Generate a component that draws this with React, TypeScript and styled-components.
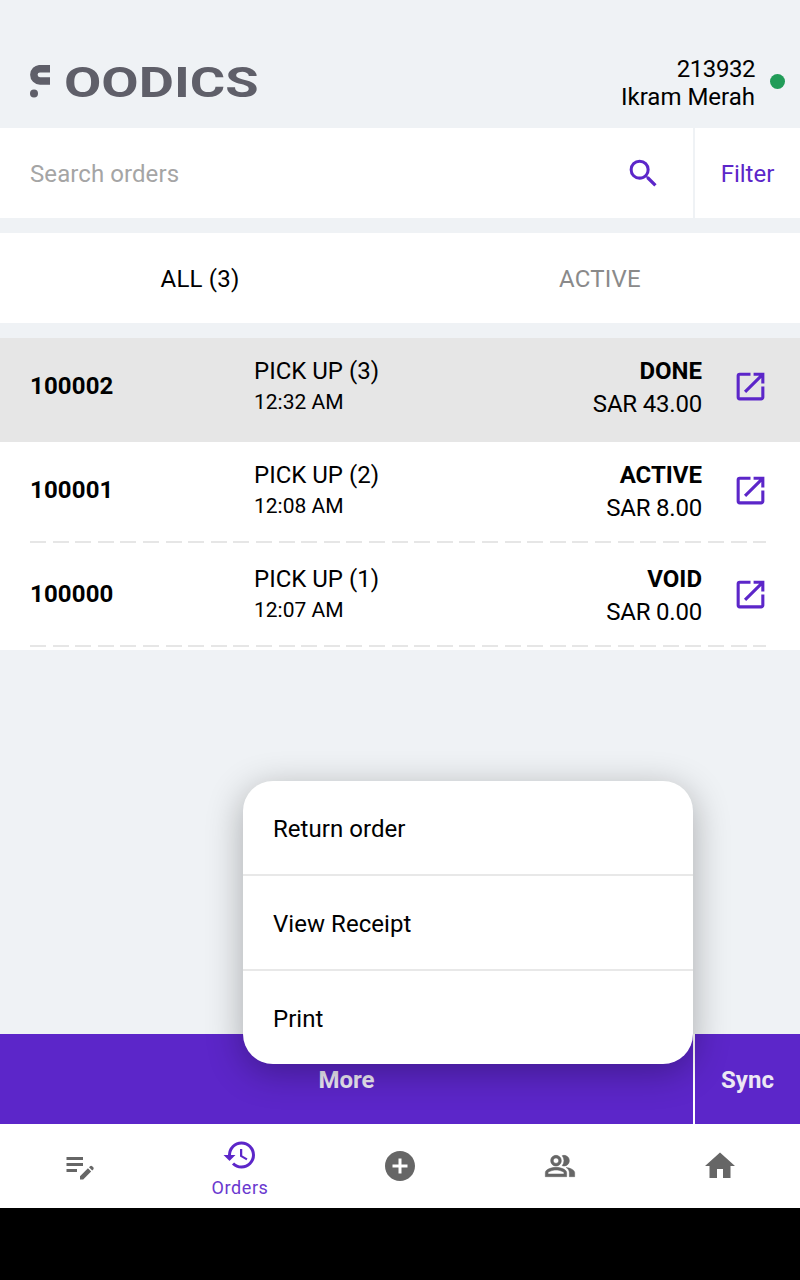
import styled, { createGlobalStyle } from "styled-components";
import {
  MdAddCircle,
  MdEditNote,
  MdHistory,
  MdHome,
  MdOpenInNew,
  MdOutlinePeopleAlt,
  MdSearch,
} from "react-icons/md";

const PURPLE = "#5c26c9";
const PAGE_BG = "#eff2f5";

const GlobalStyle = createGlobalStyle`
  html, body {
    margin: 0;
    padding: 0;
    background: #000;
  }
  * {
    box-sizing: border-box;
  }
`;

const Screen = styled.div`
  display: flex;
  flex-direction: column;
  width: 800px;
  height: 1280px;
  background: ${PAGE_BG};
  color: #000;
  font-family: Roboto, "Liberation Sans", sans-serif;
  font-size: 24px;
  overflow: hidden;
`;

// Header
const Header = styled.header`
  display: flex;
  justify-content: space-between;
  align-items: flex-end;
  height: 128px;
  padding: 0 15px 17px 30px;
  flex-shrink: 0;
`;

const Logo = styled.div`
  display: flex;
  align-items: center;
  gap: 13px;
  height: 34px;
  margin-bottom: 13px;
  color: #5f5f69;
`;

const LogoText = styled.span`
  display: inline-block;
  padding-top: 2px;
  font-size: 43px;
  font-weight: 700;
  line-height: 34px;
  transform: scaleX(1.26);
  transform-origin: left center;
`;

const Account = styled.div`
  display: flex;
  align-items: center;
  gap: 15px;
`;

const AccountText = styled.div`
  text-align: right;
  line-height: 28px;
`;

const AccountNumber = styled.div`
  letter-spacing: -0.45px;
`;

const OnlineDot = styled.span`
  width: 15px;
  height: 15px;
  margin-bottom: 4px;
  border-radius: 50%;
  background: #219c58;
`;

// Search
const SearchBar = styled.div`
  display: flex;
  align-items: stretch;
  height: 90px;
  margin-bottom: 15px;
  background: #fff;
  flex-shrink: 0;
`;

const SearchField = styled.div`
  display: flex;
  align-items: center;
  justify-content: space-between;
  width: 693px;
  padding: 0 31px 0 30px;
  color: #a5a5a5;
  letter-spacing: 0.08px;
`;

const SearchPlaceholder = styled.span`
  padding-top: 2px;
`;

const SearchIcon = styled(MdSearch)`
  color: ${PURPLE};
`;

const FilterButton = styled.button`
  flex: 1;
  padding: 2px 0 0;
  border: none;
  border-left: 2px solid ${PAGE_BG};
  background: none;
  color: ${PURPLE};
  font: inherit;
`;

// Tabs
const Tabs = styled.div`
  display: grid;
  grid-template-columns: 1fr 1fr;
  height: 90px;
  margin-bottom: 15px;
  padding-top: 2px;
  background: #fff;
  flex-shrink: 0;
`;

const Tab = styled.div<{ $active?: boolean }>`
  display: flex;
  align-items: center;
  justify-content: center;
  color: ${(p) => (p.$active ? "#000" : "#8a8a8a")};
  letter-spacing: 0.2px;
`;

// Orders
const OrderList = styled.div`
  flex: 1;
`;

const OrderRow = styled.div<{ $selected?: boolean; $dashed?: boolean }>`
  height: 104px;
  background: ${(p) => (p.$selected ? "#e6e6e6" : "#fff")};
  &::after {
    content: "";
    display: ${(p) => (p.$dashed ? "block" : "none")};
    height: 2px;
    margin: 3px 34px 0 30px;
    background: repeating-linear-gradient(
      to right,
      #e6e6e6 0,
      #e6e6e6 16px,
      transparent 16px,
      transparent 22.6px
    );
  }
`;

const OrderBody = styled.div`
  display: grid;
  grid-template-columns: 224px 1fr auto 67px;
  align-items: center;
  height: 96px;
  padding: 0 31px 0 30px;
`;

const OrderId = styled.div`
  font-weight: 700;
  letter-spacing: 0.15px;
`;

const OrderInfo = styled.div`
  display: flex;
  flex-direction: column;
  gap: 4px;
`;

const OrderType = styled.div`
  line-height: 28px;
`;

const OrderTime = styled.div`
  font-size: 21px;
  line-height: 26px;
`;

const OrderStatus = styled.div`
  display: flex;
  flex-direction: column;
  gap: 5px;
  padding-top: 2px;
  text-align: right;
  line-height: 28px;
`;

const StatusLabel = styled.div`
  font-weight: 700;
`;

const StatusTotal = styled.div`
  letter-spacing: -0.2px;
`;

const OpenIcon = styled(MdOpenInNew)`
  justify-self: end;
  color: ${PURPLE};
`;

// Bottom
const ActionArea = styled.div`
  position: relative;
  flex-shrink: 0;
`;

const ActionBar = styled.div`
  display: flex;
  height: 90px;
  background: ${PURPLE};
`;

const ActionButton = styled.button<{ $wide?: boolean }>`
  width: ${(p) => (p.$wide ? "693px" : "auto")};
  flex: ${(p) => (p.$wide ? "none" : "1")};
  padding: 2px 0 0;
  border: none;
  border-left: ${(p) => (p.$wide ? "none" : "2px solid #fff")};
  background: none;
  color: #ece8f4;
  font: inherit;
  font-weight: 700;
`;

const Popover = styled.div`
  position: absolute;
  left: 243px;
  bottom: 60px;
  width: 450px;
  border-radius: 30px;
  background: #fff;
  box-shadow: 0 8px 36px rgba(0, 0, 0, 0.3);
`;

const PopoverItem = styled.div<{ $divided?: boolean }>`
  display: flex;
  align-items: center;
  height: ${(p) => (p.$divided ? "95px" : "93px")};
  padding: 3px 30px 0;
  border-top: ${(p) => (p.$divided ? "2px solid #e8e8e8" : "none")};
  letter-spacing: 0.05px;
`;

const BottomNav = styled.nav`
  display: grid;
  grid-template-columns: repeat(5, 1fr);
  height: 84px;
  background: #fff;
  flex-shrink: 0;
`;

const NavItem = styled.div<{ $active?: boolean }>`
  display: flex;
  flex-direction: column;
  align-items: center;
  justify-content: center;
  padding-top: ${(p) => (p.$active ? "3px" : "0")};
  color: ${(p) => (p.$active ? PURPLE : "#666")};
  font-size: 18px;
  letter-spacing: 0.6px;
`;

const NavLabel = styled.span`
  margin-top: 4px;
  line-height: 22px;
  color: #6a38cf;
`;

const PeopleIcon = styled(MdOutlinePeopleAlt)`
  stroke: currentColor;
  stroke-width: 0.4;
  path[fill="none"] {
    stroke: none;
  }
`;

const BottomStrip = styled.div`
  height: 72px;
  background: #000;
  flex-shrink: 0;
`;

const orders = [
  { id: "100002", type: "PICK UP (3)", time: "12:32 AM", status: "DONE", total: "SAR 43.00" },
  { id: "100001", type: "PICK UP (2)", time: "12:08 AM", status: "ACTIVE", total: "SAR 8.00" },
  { id: "100000", type: "PICK UP (1)", time: "12:07 AM", status: "VOID", total: "SAR 0.00" },
];

const LogoMark = () => (
  <svg width="21" height="33" viewBox="0 0 21 33" aria-hidden="true">
    <path
      d="M20 3.7H10A6.15 6.15 0 0 0 10 16H20"
      fill="none"
      stroke="currentColor"
      strokeWidth="7.5"
    />
    <circle cx="4" cy="28.5" r="4" fill="currentColor" />
  </svg>
);

const App = () => {
  return (
    <Screen>
      <GlobalStyle />
      <Header>
        <Logo>
          <LogoMark />
          <LogoText>OODICS</LogoText>
        </Logo>
        <Account>
          <AccountText>
            <AccountNumber>213932</AccountNumber>
            Ikram Merah
          </AccountText>
          <OnlineDot />
        </Account>
      </Header>

      <SearchBar>
        <SearchField>
          <SearchPlaceholder>Search orders</SearchPlaceholder>
          <SearchIcon size={37} />
        </SearchField>
        <FilterButton>Filter</FilterButton>
      </SearchBar>

      <Tabs>
        <Tab $active>ALL (3)</Tab>
        <Tab>ACTIVE</Tab>
      </Tabs>

      <OrderList>
        {orders.map((order, i) => (
          <OrderRow key={order.id} $selected={i === 0} $dashed={i > 0}>
            <OrderBody>
              <OrderId>{order.id}</OrderId>
              <OrderInfo>
                <OrderType>{order.type}</OrderType>
                <OrderTime>{order.time}</OrderTime>
              </OrderInfo>
              <OrderStatus>
                <StatusLabel>{order.status}</StatusLabel>
                <StatusTotal>{order.total}</StatusTotal>
              </OrderStatus>
              <OpenIcon size={37} />
            </OrderBody>
          </OrderRow>
        ))}
      </OrderList>

      <ActionArea>
        <ActionBar>
          <ActionButton $wide>More</ActionButton>
          <ActionButton>Sync</ActionButton>
        </ActionBar>
        <Popover>
          <PopoverItem>Return order</PopoverItem>
          <PopoverItem $divided>View Receipt</PopoverItem>
          <PopoverItem $divided>Print</PopoverItem>
        </Popover>
      </ActionArea>

      <BottomNav>
        <NavItem>
          <MdEditNote size={36} />
        </NavItem>
        <NavItem $active>
          <MdHistory size={36} />
          <NavLabel>Orders</NavLabel>
        </NavItem>
        <NavItem>
          <MdAddCircle size={36} />
        </NavItem>
        <NavItem>
          <PeopleIcon size={32} />
        </NavItem>
        <NavItem>
          <MdHome size={36} />
        </NavItem>
      </BottomNav>
      <BottomStrip />
    </Screen>
  );
};

export default App;
